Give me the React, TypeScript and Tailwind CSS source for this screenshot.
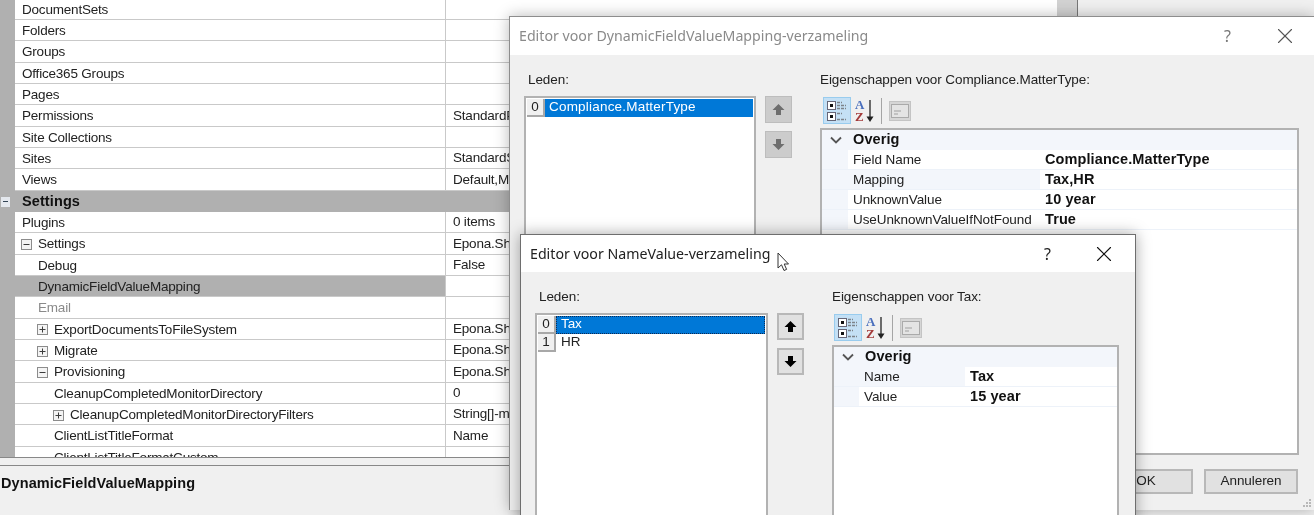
import { X } from "lucide-react";

type GridRow = {
  label: string;
  value?: string;
  indent: number;
  toggle?: "plus" | "minus";
  muted?: boolean;
  selected?: boolean;
  section?: boolean;
};

const rows: GridRow[] = [
  { label: "Folders", indent: 22 },
  { label: "Groups", indent: 22 },
  { label: "Office365 Groups", indent: 22 },
  { label: "Pages", indent: 22 },
  { label: "Permissions", value: "StandardP", indent: 22 },
  { label: "Site Collections", indent: 22 },
  { label: "Sites", value: "StandardS", indent: 22 },
  { label: "Views", value: "Default,M", indent: 22 },
  { label: "Settings", indent: 22, section: true },
  { label: "Plugins", value: "0 items", indent: 22 },
  { label: "Settings", value: "Epona.Sh", indent: 38, toggle: "minus" },
  { label: "Debug", value: "False", indent: 38 },
  { label: "DynamicFieldValueMapping", indent: 38, selected: true },
  { label: "Email", indent: 38, muted: true },
  { label: "ExportDocumentsToFileSystem", value: "Epona.Sh", indent: 54, toggle: "plus" },
  { label: "Migrate", value: "Epona.Sh", indent: 54, toggle: "plus" },
  { label: "Provisioning", value: "Epona.Sh", indent: 54, toggle: "minus" },
  { label: "CleanupCompletedMonitorDirectory", value: "0", indent: 54 },
  { label: "CleanupCompletedMonitorDirectoryFilters", value: "String[]-m", indent: 70, toggle: "plus" },
  { label: "ClientListTitleFormat", value: "Name", indent: 54 },
  { label: "ClientListTitleFormatCustom", indent: 54 },
];

function Toggle({ kind }: { kind: "plus" | "minus" }) {
  return (
    <svg width="11" height="11" viewBox="0 0 11 11" className="shrink-0">
      <rect x="0.5" y="0.5" width="10" height="10" fill="#f4f4f4" stroke="#8c8c8c" />
      <path d="M2.5 5.5h6" stroke="#3c3c3c" />
      {kind === "plus" && <path d="M5.5 2.5v6" stroke="#3c3c3c" />}
    </svg>
  );
}

function Row({ row }: { row: GridRow }) {
  if (row.section) {
    return (
      <div className="relative flex h-[21.33px] items-center bg-[#b0b0b0] pl-[22px] pt-[2px] text-[14.5px] font-bold tracking-[0.1px] text-[#111]">
        <span className="absolute left-[1px] top-[6px] flex h-[10px] w-[9px] items-center justify-center bg-[#e4e8ee]">
          <span className="h-px w-[5px] bg-[#345]" />
        </span>
        {row.label}
      </div>
    );
  }
  return (
    <div className="flex h-[21.33px]">
      <div className="w-[15px] shrink-0 bg-[#b0b0b0]" />
      <div
        className={`flex w-[431px] shrink-0 items-center gap-[6px] border-b border-r border-[#c9c9c9] pt-[2px] ${
          row.selected ? "bg-[#b0b0b0] text-[#222]" : row.muted ? "text-[#8a8a8a]" : "text-[#222]"
        }`}
        style={{ paddingLeft: row.toggle ? row.indent - 32 : row.indent - 15 }}
      >
        {row.toggle && <Toggle kind={row.toggle} />}
        <span className="whitespace-nowrap">{row.label}</span>
      </div>
      <div className="flex-1 whitespace-nowrap border-b border-[#c9c9c9] bg-white pl-[7px] pt-[1.5px] leading-[18px] text-[#222]">
        {row.value}
      </div>
    </div>
  );
}

function Arrow({ down, color }: { down?: boolean; color: string }) {
  return (
    <svg width="13" height="13" viewBox="0 0 13 13">
      <path d={down ? "M4 1h5v5h3.5L6.5 12 .5 6H4z" : "M4 12h5V7h3.5L6.5 1 .5 7H4z"} fill={color} />
    </svg>
  );
}

function Toolbar() {
  return (
    <div className="flex h-[27px] items-center">
      <div className="flex h-[27px] w-[28px] items-center justify-center border border-[#99ccee] bg-[#c4e0f5]">
        <svg width="22" height="23" viewBox="0 0 22 23">
          <rect x="1.5" y="2.5" width="8" height="8" fill="#fff" stroke="#667" />
          <rect x="4" y="5" width="3" height="3" fill="#111" />
          <rect x="1.5" y="13.5" width="8" height="8" fill="#fff" stroke="#667" />
          <rect x="4" y="16" width="3" height="3" fill="#111" />
          <path d="M11 3.5h5M11 6.5h9M11 9.5h9M11 14.5h5M11 20.5h9" stroke="#7d838a" strokeWidth="1.3" strokeDasharray="3 1" />
        </svg>
      </div>
      <div className="relative h-[27px] w-[28px] font-['Liberation_Serif',serif] text-[13px] font-bold leading-[11px]">
        <span className="absolute left-[4px] top-[2px] text-[#4a6fbd]">A</span>
        <span className="absolute left-[4px] top-[14px] text-[#a33b3b]">Z</span>
        <svg width="10" height="25" viewBox="0 0 10 25" className="absolute left-[14px] top-[2px]">
          <path d="M5 1v18" stroke="#222" strokeWidth="1.3" />
          <path d="M1.5 17.5h7L5 23z" fill="#222" />
        </svg>
      </div>
      <div className="mx-[2px] h-[26px] w-px bg-[#a5a5a5]" />
      <svg width="22" height="20" viewBox="0 0 22 20" className="ml-[5px]">
        <rect x="0.5" y="0.5" width="21" height="19" fill="#d6d6d6" stroke="#c4c4c4" />
        <rect x="2.5" y="3.5" width="17" height="13" fill="#e4e4e4" stroke="#aaaaaa" />
        <path d="M5 10h7M5 13h4" stroke="#a0a0a0" />
      </svg>
    </div>
  );
}

function PropertyGrid({
  items,
  marginW,
  labelW,
  tinted,
}: {
  items: [string, string][];
  marginW: string;
  labelW: string;
  tinted: number;
}) {
  return (
    <div className="mt-[4px] flex-1 border-2 border-[#b2b2b2] bg-white">
      <div className="flex h-[20px] items-center bg-[#f3f6fb] text-[14.5px] font-bold tracking-[0.1px] text-[#111]">
        <svg width="14" height="9" viewBox="0 0 14 9" className="ml-[7px]">
          <path d="M2 1.5l5 5 5-5" fill="none" stroke="#555" strokeWidth="1.8" />
        </svg>
        <span className="ml-[10px]">Overig</span>
      </div>
      {items.map(([label, value], i) => (
        <div key={label} className="flex h-[20px] border-b border-[#edf2f9] bg-[#f3f6fb]">
          <div className={`${marginW} shrink-0`} />
          <div
            className={`${labelW} shrink-0 whitespace-nowrap pl-[5px] leading-[19px] text-[#222] ${
              i === tinted ? "" : "bg-white"
            }`}
          >
            {label}
          </div>
          <div className="flex-1 bg-white pl-[5px] text-[14.5px] font-bold leading-[19px] tracking-[0.1px] text-[#111]">
            {value}
          </div>
        </div>
      ))}
    </div>
  );
}

export default function App() {
  return (
    <div className="relative h-[515px] w-[1314px] overflow-hidden bg-[#f0f0f0] font-['Liberation_Sans',sans-serif] text-[13.5px] tracking-[-0.2px] blur-[0.35px]">
      <div className="flex h-[515px] w-[1078px] border-r border-[#777]">
        <div className="flex min-w-0 flex-1 flex-col">
          <div className="flex h-[457px] flex-col overflow-hidden bg-white">
            <div className="flex h-[20px] shrink-0">
              <div className="w-[15px] shrink-0 bg-[#b0b0b0]" />
              <div className="w-[431px] shrink-0 border-b border-r border-[#c9c9c9] pl-[7px] leading-[19px] text-[#222]">
                DocumentSets
              </div>
              <div className="flex-1 border-b border-[#c9c9c9]" />
            </div>
            {rows.map((row, i) => (
              <Row key={i} row={row} />
            ))}
          </div>
          <div className="h-[9px] border-y border-[#888] bg-[#f0f0f0]" />
          <div className="pl-[1px] pt-[7px] text-[14.5px] font-bold tracking-[0.1px] text-[#111]">
            DynamicFieldValueMapping
          </div>
        </div>
        <div className="w-[20px] bg-[#d2d2d2]" />
      </div>

      {/* achterste venster */}
      <div className="absolute left-[509px] top-[16px] flex h-[494px] w-[805px] flex-col border-l border-t border-[#8d8d8d] bg-[#f0f0f0] tracking-[-0.08px] shadow-[0_0_14px_rgba(0,0,0,0.28)]">
        <div className="flex h-[38px] shrink-0 items-center bg-white pl-[9px] font-['Noto_Sans',sans-serif] text-[14.2px] tracking-normal text-[#8a8a8a]">
          <span className="flex-1">Editor voor DynamicFieldValueMapping-verzameling</span>
          <span className="mr-[41px] text-[16px] text-[#777]">?</span>
          <X size={26} strokeWidth={1} className="mr-[16px] text-[#555]" />
        </div>
        <div className="flex min-h-0 flex-1 pl-[14px] pt-[16px]">
          <div className="w-[232px] shrink-0">
            <div className="h-[17px] pl-[4px] leading-[17px] text-[#222]">Leden:</div>
            <div className="mt-[8px] h-[330px] border-2 border-[#b2b2b2] bg-white p-[1px]">
              <div className="flex h-[18px]">
                <div className="flex w-[18px] items-center justify-center border-b-2 border-r-2 border-[#a8a8a8] bg-[#f0f0f0] text-[#222]">
                  0
                </div>
                <div className="flex-1 bg-[#0078d7] pl-[4px] leading-[16px] tracking-[0.2px] text-white">
                  Compliance.MatterType
                </div>
              </div>
            </div>
          </div>
          <div className="ml-[9px] mt-[25px] flex w-[27px] shrink-0 flex-col gap-[8px]">
            <div className="flex h-[27px] items-center justify-center border border-[#bdbdbd] bg-[#cccccc]">
              <Arrow color="#6e6e6e" />
            </div>
            <div className="flex h-[27px] items-center justify-center border border-[#bdbdbd] bg-[#cccccc]">
              <Arrow down color="#6e6e6e" />
            </div>
          </div>
          <div className="ml-[28px] flex w-[479px] shrink-0 flex-col">
            <div className="h-[17px] leading-[17px] text-[#222]">Eigenschappen voor Compliance.MatterType:</div>
            <div className="ml-[3px] mt-[9px]">
              <Toolbar />
            </div>
            <div className="flex h-[331px] flex-col">
              <PropertyGrid
                marginW="w-[26px]"
                labelW="w-[192px]"
                tinted={1}
                items={[
                  ["Field Name", "Compliance.MatterType"],
                  ["Mapping", "Tax,HR"],
                  ["UnknownValue", "10 year"],
                  ["UseUnknownValueIfNotFound", "True"],
                ]}
              />
            </div>
            <div className="mr-[1px] mt-[14px] flex justify-end gap-[11px]">
              <div className="flex h-[25px] w-[94px] items-center justify-center border-2 border-[#b8b8b8] bg-[#e1e1e1] text-[#222]">
                OK
              </div>
              <div className="flex h-[25px] w-[94px] items-center justify-center border-2 border-[#b8b8b8] bg-[#e1e1e1] text-[#222]">
                Annuleren
              </div>
            </div>
          </div>
        </div>
        {/* sleepgreep */}
        <svg width="10" height="10" viewBox="0 0 10 10" className="absolute bottom-[2px] right-[2px]">
          <path d="M7 1h2v2H7zM4 4h2v2H4zM7 4h2v2H7zM1 7h2v2H1zM4 7h2v2H4zM7 7h2v2H7z" fill="#b8b8b8" />
        </svg>
      </div>

      {/* voorste venster */}
      <div className="absolute left-[520px] top-[234px] flex h-[300px] w-[616px] flex-col border border-[#6e6e6e] bg-[#f0f0f0] tracking-[-0.08px] shadow-[0_0_14px_rgba(0,0,0,0.35)]">
        <div className="flex h-[37px] shrink-0 items-center bg-white pl-[9px] font-['Noto_Sans',sans-serif] text-[14.2px] tracking-normal text-[#222]">
          <span className="flex-1">Editor voor NameValue-verzameling</span>
          <span className="mr-[40px] text-[16px] text-[#222]">?</span>
          <X size={26} strokeWidth={1} className="mr-[18px] text-[#111]" />
        </div>
        <div className="flex min-h-0 flex-1 pl-[14px] pt-[16px]">
          <div className="w-[233px] shrink-0">
            <div className="h-[17px] pl-[4px] leading-[17px] text-[#222]">Leden:</div>
            <div className="mt-[8px] h-[240px] border-2 border-[#b2b2b2] bg-white p-[1px]">
              <div className="flex h-[18px]">
                <div className="flex w-[18px] items-center justify-center border-b-2 border-r-2 border-[#a8a8a8] bg-[#f0f0f0] text-[#222]">
                  0
                </div>
                <div className="flex-1 border border-dotted border-[#0b2a55] bg-[#0078d7] pl-[4px] leading-[14px] text-white">
                  Tax
                </div>
              </div>
              <div className="flex h-[18px]">
                <div className="flex w-[18px] items-center justify-center border-b-2 border-r-2 border-[#a8a8a8] bg-[#f0f0f0] text-[#222]">
                  1
                </div>
                <div className="flex-1 pl-[5px] leading-[16px] text-[#222]">HR</div>
              </div>
            </div>
          </div>
          <div className="ml-[9px] mt-[25px] flex w-[27px] shrink-0 flex-col gap-[8px]">
            <div className="flex h-[27px] items-center justify-center border-2 border-[#b8b8b8] bg-[#e1e1e1]">
              <Arrow color="#000" />
            </div>
            <div className="flex h-[27px] items-center justify-center border-2 border-[#b8b8b8] bg-[#e1e1e1]">
              <Arrow down color="#000" />
            </div>
          </div>
          <div className="ml-[28px] flex w-[287px] shrink-0 flex-col">
            <div className="h-[17px] leading-[17px] text-[#222]">Eigenschappen voor Tax:</div>
            <div className="ml-[2px] mt-[9px]">
              <Toolbar />
            </div>
            <div className="flex h-[200px] flex-col">
              <PropertyGrid
                marginW="w-[25px]"
                labelW="w-[106px]"
                tinted={0}
                items={[
                  ["Name", "Tax"],
                  ["Value", "15 year"],
                ]}
              />
            </div>
          </div>
        </div>
      </div>

      {/* muisaanwijzer */}
      <svg width="15" height="21" viewBox="0 0 15 21" className="absolute left-[777px] top-[252px]">
        <path d="M1 1v15l3.5-3.2L7 18.5l2.6-1.1-2.4-5.4H11.5z" fill="#fff" stroke="#333" strokeWidth="1" />
      </svg>
    </div>
  );
}
